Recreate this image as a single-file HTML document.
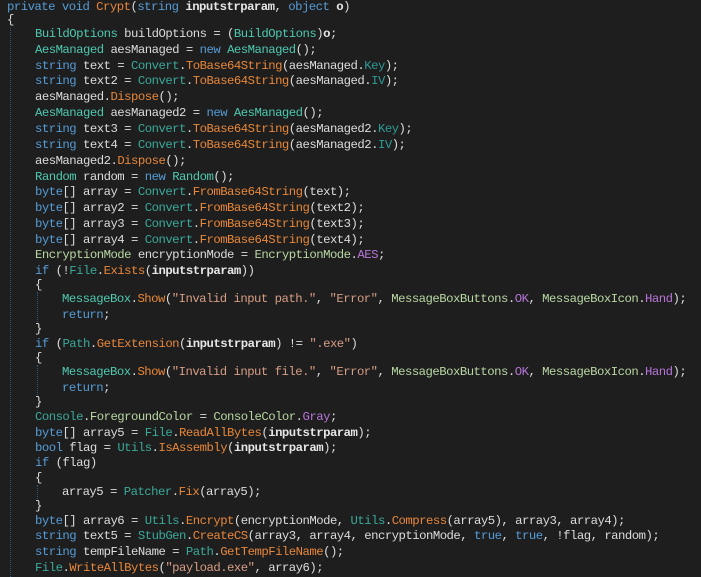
<!DOCTYPE html>
<html><head><meta charset="utf-8"><style>
body{margin:0;width:701px;height:577px;background:#1e1e1e;overflow:hidden;position:relative;font-family:"Liberation Mono",monospace;font-size:12.3px;letter-spacing:-0.52px;color:#dcdcdc}
.l{position:absolute;white-space:pre;height:16px;line-height:16px}
.k{color:#569cd6}.t{color:#4ec9b0}.c{color:#3aa99a}.m{color:#e8873a}.s{color:#d69d85}.p{font-weight:bold;color:#e6e6e6}.e{color:#b8d7a3}.f{color:#b775d9}.pr{color:#2f9c98}
.g{position:absolute;width:0;border-left:1px dotted #2f5a80}
</style></head><body>
<div class="g" style="left:10px;top:28px;height:549px"></div>
<div class="g" style="left:37px;top:292px;height:30px"></div>
<div class="g" style="left:37px;top:365px;height:30px"></div>
<div class="g" style="left:37px;top:485px;height:14px"></div>
<div class="l" style="left:7px;top:-1px"><span class="k">private void</span> <span class="m">Crypt</span>(<span class="k">string</span> <span class="p">inputstrparam</span>, <span class="k">object</span> <span class="p">o</span>)</div>
<div class="l" style="left:7px;top:12px">{</div>
<div class="l" style="left:35px;top:26px"><span class="t">BuildOptions</span> buildOptions = (<span class="t">BuildOptions</span>)<span class="p">o</span>;</div>
<div class="l" style="left:35px;top:42px"><span class="t">AesManaged</span> aesManaged = <span class="k">new</span> <span class="t">AesManaged</span>();</div>
<div class="l" style="left:35px;top:58px"><span class="k">string</span> text = <span class="c">Convert</span>.<span class="m">ToBase64String</span>(aesManaged.<span class="pr">Key</span>);</div>
<div class="l" style="left:35px;top:73px"><span class="k">string</span> text2 = <span class="c">Convert</span>.<span class="m">ToBase64String</span>(aesManaged.<span class="pr">IV</span>);</div>
<div class="l" style="left:35px;top:89px">aesManaged.<span class="m">Dispose</span>();</div>
<div class="l" style="left:35px;top:105px"><span class="t">AesManaged</span> aesManaged2 = <span class="k">new</span> <span class="t">AesManaged</span>();</div>
<div class="l" style="left:35px;top:121px"><span class="k">string</span> text3 = <span class="c">Convert</span>.<span class="m">ToBase64String</span>(aesManaged2.<span class="pr">Key</span>);</div>
<div class="l" style="left:35px;top:137px"><span class="k">string</span> text4 = <span class="c">Convert</span>.<span class="m">ToBase64String</span>(aesManaged2.<span class="pr">IV</span>);</div>
<div class="l" style="left:35px;top:153px">aesManaged2.<span class="m">Dispose</span>();</div>
<div class="l" style="left:35px;top:169px"><span class="t">Random</span> random = <span class="k">new</span> <span class="t">Random</span>();</div>
<div class="l" style="left:35px;top:184px"><span class="k">byte</span>[] array = <span class="c">Convert</span>.<span class="m">FromBase64String</span>(text);</div>
<div class="l" style="left:35px;top:200px"><span class="k">byte</span>[] array2 = <span class="c">Convert</span>.<span class="m">FromBase64String</span>(text2);</div>
<div class="l" style="left:35px;top:216px"><span class="k">byte</span>[] array3 = <span class="c">Convert</span>.<span class="m">FromBase64String</span>(text3);</div>
<div class="l" style="left:35px;top:232px"><span class="k">byte</span>[] array4 = <span class="c">Convert</span>.<span class="m">FromBase64String</span>(text4);</div>
<div class="l" style="left:35px;top:247px"><span class="e">EncryptionMode</span> encryptionMode = <span class="e">EncryptionMode</span>.<span class="f">AES</span>;</div>
<div class="l" style="left:35px;top:263px"><span class="k">if</span> (!<span class="c">File</span>.<span class="m">Exists</span>(<span class="p">inputstrparam</span>))</div>
<div class="l" style="left:35px;top:277px">{</div>
<div class="l" style="left:62px;top:291px"><span class="t">MessageBox</span>.<span class="m">Show</span>(<span class="s">"Invalid input path."</span>, <span class="s">"Error"</span>, <span class="e">MessageBoxButtons</span>.<span class="f">OK</span>, <span class="e">MessageBoxIcon</span>.<span class="f">Hand</span>);</div>
<div class="l" style="left:62px;top:307px"><span class="k">return</span>;</div>
<div class="l" style="left:35px;top:321px">}</div>
<div class="l" style="left:35px;top:336px"><span class="k">if</span> (<span class="c">Path</span>.<span class="m">GetExtension</span>(<span class="p">inputstrparam</span>) != <span class="s">".exe"</span>)</div>
<div class="l" style="left:35px;top:350px">{</div>
<div class="l" style="left:62px;top:364px"><span class="t">MessageBox</span>.<span class="m">Show</span>(<span class="s">"Invalid input file."</span>, <span class="s">"Error"</span>, <span class="e">MessageBoxButtons</span>.<span class="f">OK</span>, <span class="e">MessageBoxIcon</span>.<span class="f">Hand</span>);</div>
<div class="l" style="left:62px;top:380px"><span class="k">return</span>;</div>
<div class="l" style="left:35px;top:394px">}</div>
<div class="l" style="left:35px;top:409px"><span class="c">Console</span>.<span class="e">ForegroundColor</span> = <span class="e">ConsoleColor</span>.<span class="f">Gray</span>;</div>
<div class="l" style="left:35px;top:425px"><span class="k">byte</span>[] array5 = <span class="c">File</span>.<span class="m">ReadAllBytes</span>(<span class="p">inputstrparam</span>);</div>
<div class="l" style="left:35px;top:440px"><span class="k">bool</span> flag = <span class="c">Utils</span>.<span class="m">IsAssembly</span>(<span class="p">inputstrparam</span>);</div>
<div class="l" style="left:35px;top:455px"><span class="k">if</span> (flag)</div>
<div class="l" style="left:35px;top:470px">{</div>
<div class="l" style="left:62px;top:484px">array5 = <span class="c">Patcher</span>.<span class="m">Fix</span>(array5);</div>
<div class="l" style="left:35px;top:498px">}</div>
<div class="l" style="left:35px;top:513px"><span class="k">byte</span>[] array6 = <span class="c">Utils</span>.<span class="m">Encrypt</span>(encryptionMode, <span class="c">Utils</span>.<span class="m">Compress</span>(array5), array3, array4);</div>
<div class="l" style="left:35px;top:528px"><span class="k">string</span> text5 = <span class="c">StubGen</span>.<span class="m">CreateCS</span>(array3, array4, encryptionMode, <span class="k">true</span>, <span class="k">true</span>, !flag, random);</div>
<div class="l" style="left:35px;top:544px"><span class="k">string</span> tempFileName = <span class="c">Path</span>.<span class="m">GetTempFileName</span>();</div>
<div class="l" style="left:35px;top:560px"><span class="c">File</span>.<span class="m">WriteAllBytes</span>(<span class="s">"payload.exe"</span>, array6);</div>
</body></html>
